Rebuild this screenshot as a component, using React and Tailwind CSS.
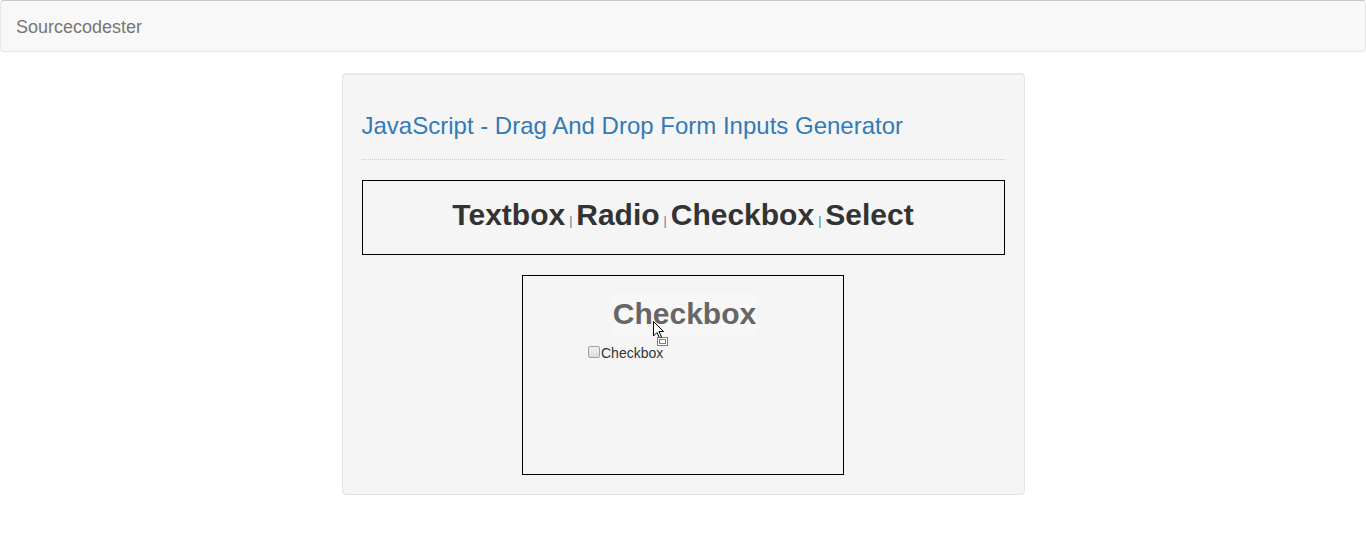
import React from 'react';

const font = { fontFamily: '"Liberation Sans", Arial, sans-serif' };

const tabs = ['Textbox', 'Radio', 'Checkbox', 'Select'];

const DragCursor = () => (
  <svg className="absolute left-[130px] top-[45px]" width="16" height="26" viewBox="0 0 16 26">
    <path d="M0.5 0.5 L0.5 15 L4 11.5 L6.5 17 L8.5 16 L6 10.5 L10.5 10.5 Z" fill="#fff" stroke="#000" strokeWidth="1" />
    <rect x="4.5" y="16.5" width="10" height="8" fill="#fff" stroke="#000" strokeWidth="1" strokeDasharray="1 1" />
    <rect x="6.5" y="18.5" width="6" height="4" fill="none" stroke="#000" strokeWidth="1" strokeDasharray="1 1" />
  </svg>
);

const App = () => {
  return (
    <div className="min-h-[534px] bg-white" style={font}>
      {/* Navbar */}
      <nav className="h-[52px] bg-[#f8f8f8] border border-[#e7e7e7] border-t-[#c8c8c8] rounded-[4px] flex items-center px-[15px] pt-[3px]">
        <span className="text-[18px] text-[#777]">Sourcecodester</span>
      </nav>

      {/* Well */}
      <div className="mx-auto mt-[21px] w-[683px] bg-[#f5f5f5] border border-[#e3e3e3] rounded-[4px] shadow-[inset_0_1px_1px_rgba(0,0,0,0.05)] px-[19px] pt-[39px] pb-[19px]">
        <h3 className="text-[24px] leading-[26px] text-[#337ab7]">JavaScript - Drag And Drop Form Inputs Generator</h3>
        <div className="mt-[20px] border-t border-dotted border-[#ccc]" />

        <div className="mt-[20px] h-[75px] border border-black flex items-center justify-center">
          <h2 className="text-[30px] leading-[33px] font-bold text-[#333] flex items-baseline">
            {tabs.map((t, i) => (
              <React.Fragment key={t}>
                {i > 0 && <span className="text-[12px] font-normal text-[#3f78a8] px-[4px]">|</span>}
                <span>{t}</span>
              </React.Fragment>
            ))}
          </h2>
        </div>

        {/* Drop zone */}
        <div className="relative mx-auto mt-[20px] w-[322px] h-[200px] border border-black">
          <div className="flex justify-center mt-[17px] pl-[3px]">
            <h2 className="text-[30px] leading-[41px] font-bold text-[#666] bg-[#f7f7f7] px-[1px]">Checkbox</h2>
          </div>
          <div className="mt-[6px] pl-[65px] flex items-center text-[14px] text-[#333] leading-[20px]">
            <input type="checkbox" className="m-0 w-[12px] h-[12px] appearance-none rounded-[2px] border border-[#a0a0a0] bg-[linear-gradient(#f0f0f0,#dcdcdc)]" />
            <span className="ml-[1px] mt-[3px]">Checkbox</span>
          </div>
          <DragCursor />
        </div>
      </div>
    </div>
  );
};

export default App;
